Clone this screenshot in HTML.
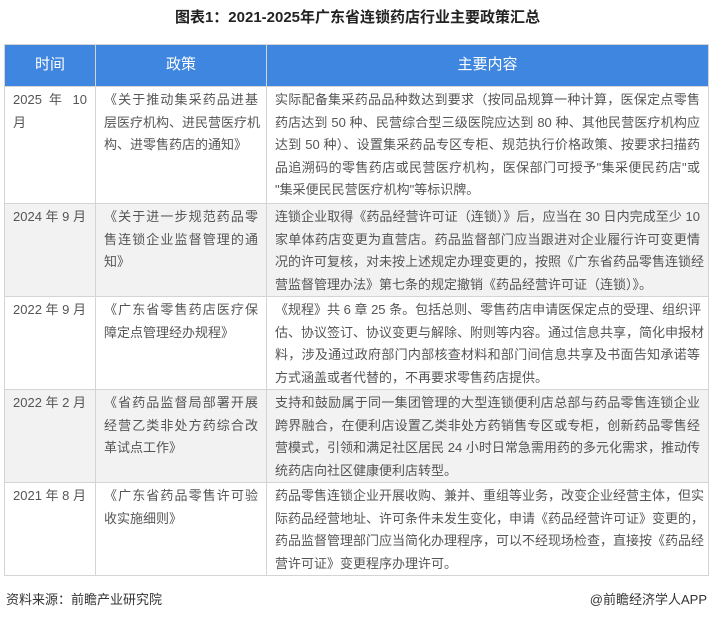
<!DOCTYPE html>
<html><head><meta charset="utf-8"><style>
body{margin:0;width:715px;height:619px;background:#fff;font-family:"Liberation Sans","Noto Sans CJK SC",sans-serif;position:relative;overflow:hidden}
.title{position:absolute;top:8px;left:0;width:715px;text-align:center;font-weight:bold;font-size:15px;color:#222;line-height:20px}
table{position:absolute;top:44px;left:4px;width:705px;border-collapse:collapse;table-layout:fixed}
td,th{border:1px solid #d4d4d4;vertical-align:top;color:#555;font-size:13px;line-height:22.5px;padding:2px 8px 0 8px;font-weight:normal;overflow:hidden}
th{background:#3f86e0;color:#fff;font-size:15px;text-align:center;vertical-align:middle;height:41px;padding:0}
tr.g td{background:#f2f2f2}
td span{display:block;white-space:nowrap;text-align:justify;text-align-last:justify}
td span.l{text-align-last:left}
.foot{position:absolute;top:589px;font-size:13px;color:#333}
</style></head><body>
<div class="title">图表1：2021-2025年广东省连锁药店行业主要政策汇总</div>
<table>
<colgroup><col style="width:91px"><col style="width:171px"><col></colgroup>
<tr><th>时间</th><th>政策</th><th>主要内容</th></tr>
<tr style="height:117px"><td><span>2025 年 10</span><span class="l">月</span></td><td><span>《关于推动集采药品进基</span><span>层医疗机构、进民营医疗机</span><span class="l">构、进零售药店的通知》</span></td><td><span>实际配备集采药品品种数达到要求（按同品规算一种计算，医保定点零售</span><span>药店达到 50 种、民营综合型三级医院应达到 80 种、其他民营医疗机构应</span><span>达到 50 种）、设置集采药品专区专柜、规范执行价格政策、按要求扫描药</span><span>品追溯码的零售药店或民营医疗机构，医保部门可授予"集采便民药店"或</span><span class="l">"集采便民民营医疗机构"等标识牌。</span></td></tr>
<tr class="g" style="height:93px"><td><span class="l">2024 年 9 月</span></td><td><span>《关于进一步规范药品零</span><span>售连锁企业监督管理的通</span><span class="l">知》</span></td><td><span>连锁企业取得《药品经营许可证（连锁）》后，应当在 30 日内完成至少 10</span><span>家单体药店变更为直营店。药品监督部门应当跟进对企业履行许可变更情</span><span>况的许可复核，对未按上述规定办理变更的，按照《广东省药品零售连锁经</span><span class="l">营监督管理办法》第七条的规定撤销《药品经营许可证（连锁）》。</span></td></tr>
<tr style="height:92px"><td><span class="l">2022 年 9 月</span></td><td><span>《广东省零售药店医疗保</span><span class="l">障定点管理经办规程》</span></td><td><span>《规程》共 6 章 25 条。包括总则、零售药店申请医保定点的受理、组织评</span><span>估、协议签订、协议变更与解除、附则等内容。通过信息共享，简化申报材</span><span>料，涉及通过政府部门内部核查材料和部门间信息共享及书面告知承诺等</span><span class="l">方式涵盖或者代替的，不再要求零售药店提供。</span></td></tr>
<tr class="g" style="height:93px"><td><span class="l">2022 年 2 月</span></td><td><span>《省药品监督局部署开展</span><span>经营乙类非处方药综合改</span><span class="l">革试点工作》</span></td><td><span>支持和鼓励属于同一集团管理的大型连锁便利店总部与药品零售连锁企业</span><span>跨界融合，在便利店设置乙类非处方药销售专区或专柜，创新药品零售经</span><span>营模式，引领和满足社区居民 24 小时日常急需用药的多元化需求，推动传</span><span class="l">统药店向社区健康便利店转型。</span></td></tr>
<tr style="height:92px"><td><span class="l">2021 年 8 月</span></td><td><span>《广东省药品零售许可验</span><span class="l">收实施细则》</span></td><td><span>药品零售连锁企业开展收购、兼并、重组等业务，改变企业经营主体，但实</span><span>际药品经营地址、许可条件未发生变化，申请《药品经营许可证》变更的，</span><span>药品监督管理部门应当简化办理程序，可以不经现场检查，直接按《药品经</span><span class="l">营许可证》变更程序办理许可。</span></td></tr>
</table>
<div class="foot" style="left:6px">资料来源：前瞻产业研究院</div>
<div class="foot" style="right:8px">@前瞻经济学人APP</div>
</body></html>
